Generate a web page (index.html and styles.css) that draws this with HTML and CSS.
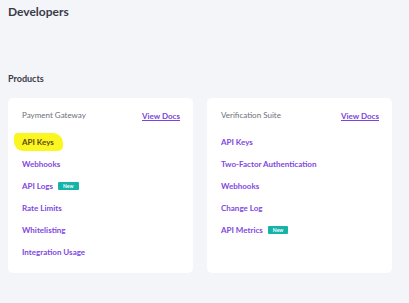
FILE: index.html
```html
<!DOCTYPE html>
<html lang="en">
<head>
    <meta charset="UTF-8">
    <meta name="viewport" content="width=device-width, initial-scale=1.0">
    <title>Developers</title>
    <link rel="stylesheet" href="styles.css">
</head>
<body>

<div class="page">
    <h1 class="page-title">Developers</h1>

    <h2 class="section-title">Products</h2>

    <div class="products">
        <div class="card">
            <div class="card-head">
                <span class="card-name">Payment Gateway</span>
                <a class="docs" href="#">View Docs</a>
            </div>
            <ul class="links">
                <li><a href="#" class="marked">API Keys</a></li>
                <li><a href="#">Webhooks</a></li>
                <li><a href="#">API Logs</a><span class="badge">New</span></li>
                <li><a href="#">Rate Limits</a></li>
                <li><a href="#">Whitelisting</a></li>
                <li><a href="#">Integration Usage</a></li>
            </ul>
        </div>

        <div class="card">
            <div class="card-head">
                <span class="card-name">Verification Suite</span>
                <a class="docs" href="#">View Docs</a>
            </div>
            <ul class="links">
                <li><a href="#">API Keys</a></li>
                <li><a href="#">Two-Factor Authentication</a></li>
                <li><a href="#">Webhooks</a></li>
                <li><a href="#">Change Log</a></li>
                <li><a href="#">API Metrics</a><span class="badge">New</span></li>
            </ul>
        </div>
    </div>
</div>

</body>
</html>
```

FILE: styles.css
```css
body {
    margin: 0;
    background: #f4f5f9;
    font-family: Lato, "Noto Sans", sans-serif;
    color: #2d2e3a;
}
.page {
    width: 384px;
    padding: 4px 8px;
}
.page-title {
    margin: 0;
    font-size: 12px;
    font-weight: 700;
    line-height: 15px;
    color: #3a3b48;
}
.section-title {
    margin: 54px 0 0;
    font-size: 9px;
    font-weight: 700;
    line-height: 12px;
    color: #3a3b48;
}
.products {
    display: grid;
    grid-template-columns: 1fr 1fr;
    gap: 14px;
    margin-top: 13px;
}
.card {
    background: #fff;
    border-radius: 5px;
    padding: 10px 13px 14px 14px;
    height: 151px;
}
.card-head {
    display: flex;
    justify-content: space-between;
    align-items: center;
    margin-bottom: 10px;
}
.card-name {
    font-size: 8px;
    color: #6e6f7a;
}
.docs {
    font-size: 8px;
    font-weight: 700;
    color: #7b44dc;
    text-decoration: underline;
    margin-top: 3px;
}
.links {
    list-style: none;
    margin: 0;
    padding: 0;
}
.links li {
    display: flex;
    align-items: center;
    height: 22px;
}
.links a {
    font-size: 8px;
    font-weight: 700;
    color: #8049e0;
    text-decoration: none;
}
.links a.marked {
    background: #fbf520;
    color: #5e4a16;
    padding: 4px 9px 4px 8px;
    margin-left: -8px;
    border-radius: 4px 10px 5px 9px;
}
.badge {
    margin-left: 5px;
    padding: 0 5px;
    height: 8px;
    line-height: 8px;
    font-size: 5px;
    font-weight: 700;
    color: #fff;
    background: #15b3a8;
    border-radius: 1px;
}
```
